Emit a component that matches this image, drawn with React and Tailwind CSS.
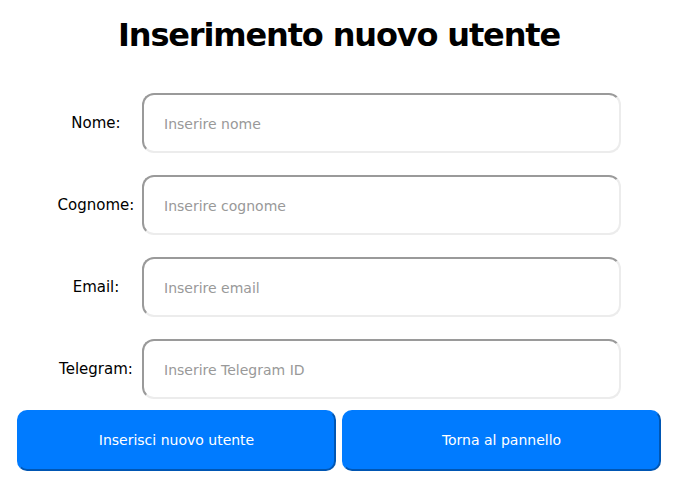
import React from 'react';

const FIELDS = [
  { label: 'Nome:', placeholder: 'Inserire nome', type: 'text' },
  { label: 'Cognome:', placeholder: 'Inserire cognome', type: 'text' },
  { label: 'Email:', placeholder: 'Inserire email', type: 'email' },
  { label: 'Telegram:', placeholder: 'Inserire Telegram ID', type: 'text' },
];

const font = { fontFamily: '"DejaVu Sans", Verdana, sans-serif' };

export default function App() {
  return (
    <div className="w-[678px] h-[484px] bg-white text-black px-[17px] font-['DejaVu_Sans',Verdana,sans-serif]" style={font}>
      {/* Titolo */}
      <h1 className="pt-[17px] text-center text-[32px] leading-[37px] font-bold tracking-[-1.15px]">Inserimento nuovo utente</h1>

      {/* Campi */}
      <div className="mt-[39px] flex flex-col gap-[22px]">
        {FIELDS.map(f => (
          <div key={f.label} className="flex items-center">
            <label className="ml-[39px] w-[80px] text-center text-[15px]">{f.label}</label>
            <input
              type={f.type}
              placeholder={f.placeholder}
              className="ml-[6px] w-[479px] h-[60px] rounded-[12px] border-2 border-t-[#9a9a9a] border-l-[#9a9a9a] border-b-[#ececec] border-r-[#ececec] bg-white pl-[20px] pt-[2px] text-[14px] outline-none placeholder:text-[#999]"
            />
          </div>
        ))}
      </div>

      {/* Pulsanti */}
      <div className="mt-[11px] flex gap-[6px]">
        <button className="w-[319px] h-[61px] rounded-[10px] bg-[#007bff] border-2 border-t-[#007bff] border-l-[#007bff] border-b-[#0056b3] border-r-[#0056b3] text-white text-[14px]">
          Inserisci nuovo utente
        </button>
        <button className="w-[319px] h-[61px] rounded-[10px] bg-[#007bff] border-2 border-t-[#007bff] border-l-[#007bff] border-b-[#0056b3] border-r-[#0056b3] text-white text-[14px]">
          Torna al pannello
        </button>
      </div>
    </div>
  );
}
